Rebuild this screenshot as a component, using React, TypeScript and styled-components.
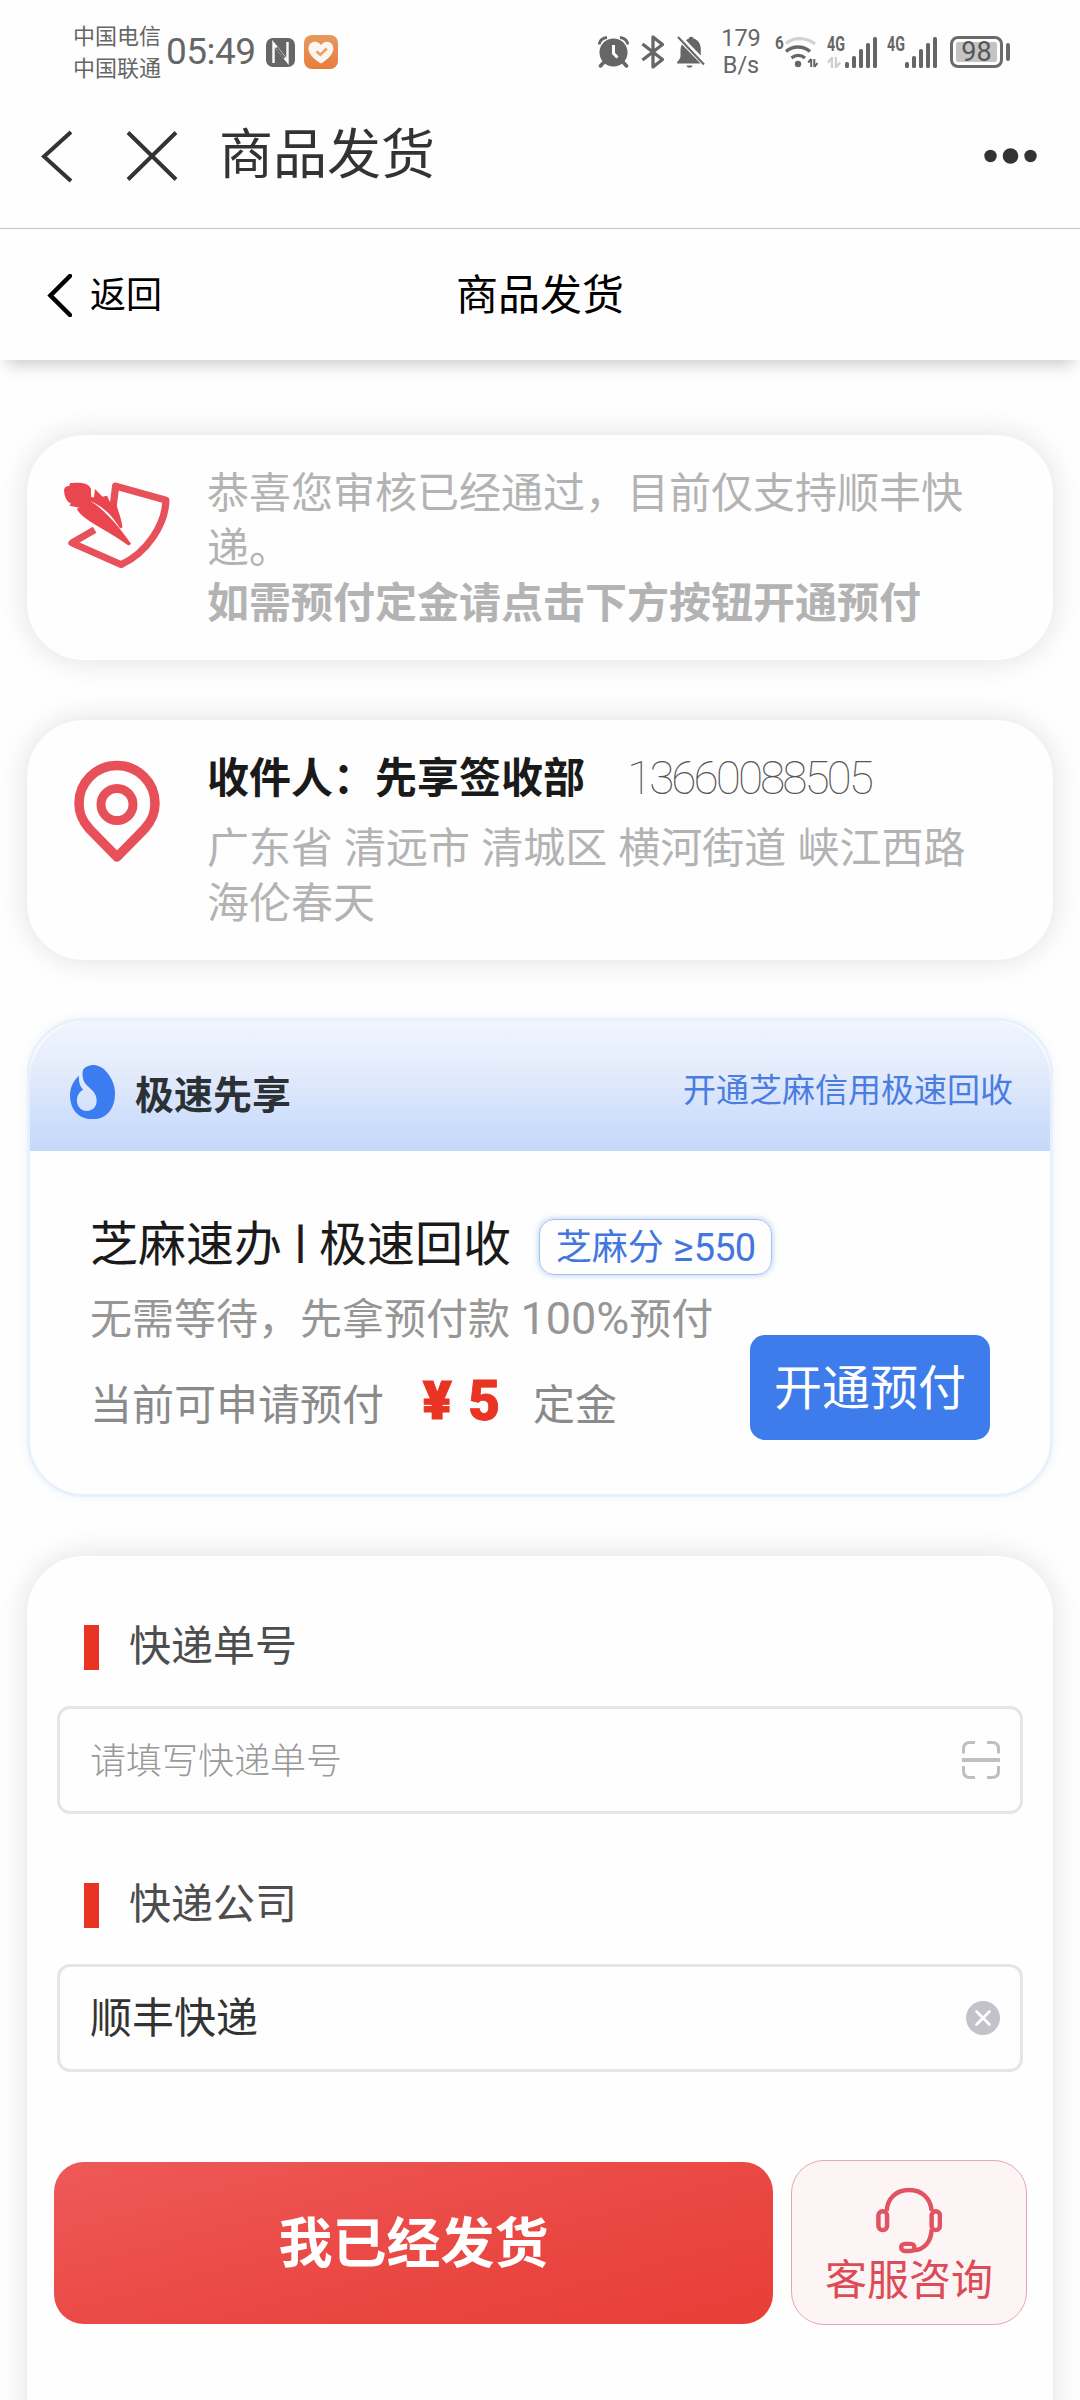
import React from 'react';
import styled, { createGlobalStyle } from 'styled-components';

const GlobalStyle = createGlobalStyle`
  * { box-sizing: border-box; }
  body {
    margin: 0;
    background: #fff;
    font-family: Roboto, "Noto Sans CJK SC", sans-serif;
  }
  svg { display: block; flex: none; }
`;

const Page = styled.div`
  width: 1080px;
  height: 2400px;
  overflow: hidden;
  background: #fefefe;
  display: flex;
  flex-direction: column;
`;

/* ---------- status bar ---------- */

const StatusBar = styled.div`
  height: 104px;
  flex: none;
  padding: 0 70px 0 73px;
  display: flex;
  align-items: center;
  justify-content: space-between;
  color: #666;
`;

const StatusGroup = styled.div`
  display: flex;
  align-items: center;
`;

const Carriers = styled.div`
  font-size: 22px;
  line-height: 32px;
  width: 93px;
  padding-top: 2px;
  white-space: nowrap;
`;

const Clock = styled.div`
  font-size: 37px;
  line-height: 40px;
  width: 100px;
  letter-spacing: -0.5px;
`;

const NfcSlot = styled.div`
  margin-right: 9px;
`;

const NetSpeed = styled.div`
  width: 44px;
  margin: 0 12px 0 13px;
  font-size: 23.5px;
  line-height: 27px;
  text-align: center;
`;

const AlarmSlot = styled.div`
  margin-right: 12px;
`;

const BluetoothSlot = styled.div`
  margin-right: 12px;
`;

const SignalBlock = styled.div`
  width: 50px;
  height: 32px;
  margin-right: 10px;
  display: flex;
  justify-content: space-between;
`;

const NetLabel = styled.div`
  display: flex;
  flex-direction: column;
  justify-content: space-between;
  width: 17px;
  font-size: 21px;
  line-height: 16px;
  font-weight: 700;
  transform: scaleX(0.68);
  transform-origin: left;
`;

const WifiBlock = styled.div`
  display: flex;
  width: 43px;
  margin-right: 9px;
`;

const WifiGeneration = styled.span`
  width: 9px;
  font-size: 18px;
  line-height: 14px;
  font-weight: 700;
  transform: scaleX(0.85);
  transform-origin: left;
`;

const Battery = styled.div`
  width: 53px;
  height: 32px;
  margin-left: 3px;
  border: 3px solid #6b6b6b;
  border-radius: 8px;
  padding: 3px;
`;

const BatteryLevel = styled.div`
  height: 20px;
  border-radius: 2px;
  background: #c4c4c4;
  color: #555;
  font-size: 27px;
  line-height: 21px;
  text-align: center;
`;

const BatteryTip = styled.div`
  width: 4px;
  height: 18px;
  margin-left: 3px;
  border-radius: 2px;
  background: #6b6b6b;
`;

/* ---------- navigation ---------- */

const NavBar = styled.header`
  height: 125px;
  flex: none;
  padding: 0 42px 20px 41px;
  display: flex;
  align-items: center;
  border-bottom: 1px solid #c6c6c6;
`;

const NavTitle = styled.h1`
  flex: 1;
  margin: 0 0 0 41px;
  font-size: 54px;
  line-height: 64px;
  font-weight: 400;
  color: #333;
`;

const CloseSlot = styled.div`
  margin-left: 53px;
`;

const SubHeader = styled.div`
  height: 131px;
  flex: none;
  padding: 1px 47px 0;
  display: grid;
  grid-template-columns: 1fr auto 1fr;
  align-items: center;
  color: #000;
  background: #fefefe;
  box-shadow: 0 12px 15px -7px rgba(0, 0, 0, 0.2);
`;

const BackLink = styled.div`
  display: flex;
  align-items: center;
  gap: 18px;
  font-size: 36px;
  line-height: 44px;
`;

const BackLabel = styled.span`
  padding-top: 2px;
`;

const SubTitle = styled.h2`
  margin: 0;
  padding-top: 2px;
  font-size: 42px;
  line-height: 50px;
  font-weight: 400;
`;

/* ---------- cards ---------- */

const Content = styled.main`
  flex: none;
  padding: 75px 27px 0;
  display: flex;
  flex-direction: column;
`;

const Card = styled.section`
  border-radius: 57px;
  background: #fefefe;
  box-shadow: 0 0 30px rgba(0, 0, 0, 0.12);
`;

const InfoCard = styled(Card)<{ $height: number; $gap: number }>`
  height: ${(p) => p.$height}px;
  margin-bottom: ${(p) => p.$gap}px;
  padding-top: 31px;
  display: flex;
`;

const IconColumn = styled.div<{ $top: number }>`
  width: 180px;
  flex: none;
  padding-top: ${(p) => p.$top}px;
  display: flex;
  justify-content: center;
  align-items: flex-start;
`;

const InfoText = styled.div`
  width: 775px;
  font-size: 42px;
  line-height: 55px;
  color: #b3b3b3;
`;

const Strong = styled.div`
  font-weight: 700;
`;

const Recipient = styled.div`
  display: flex;
  gap: 42px;
  margin-bottom: 15px;
  color: #1a1a1a;
  font-weight: 700;
`;

const Phone = styled.span`
  font-family: Roboto, sans-serif;
  font-weight: 100;
  font-size: 46px;
  line-height: 54px;
  letter-spacing: -3px;
  color: #555;
`;

const Address = styled.div`
  white-space: nowrap;
  word-spacing: 0.7px;
`;

/* ---------- prepay card ---------- */

const PrepayCard = styled.section`
  height: 479px;
  margin: -2px 0 59px;
  border: 3px solid #e8f0fb;
  border-radius: 57px;
  background: #fefefe;
  box-shadow: 0 0 8px rgba(70, 130, 230, 0.1);
`;

const PrepayHeader = styled.div`
  height: 130px;
  padding: 0 37px 0 40px;
  display: flex;
  align-items: center;
  border-radius: 57px 57px 0 0;
  background: linear-gradient(180deg, #f0f5fe 0%, #e2eafb 42%, #cfdffc 75%, #c4d9f8 100%);
`;

const BrandSlot = styled.div`
  margin-top: 12px;
`;

const BrandName = styled.div`
  flex: 1;
  margin: 20px 0 0 20px;
  font-size: 39px;
  line-height: 46px;
  font-weight: 700;
  color: #2c3136;
`;

const PromoLink = styled.div`
  margin-top: 9px;
  font-size: 33px;
  line-height: 40px;
  color: #4a7de2;
`;

const PrepayBody = styled.div`
  padding: 64px 60px 0 60px;
`;

const TitleRow = styled.div`
  height: 60px;
  display: flex;
  align-items: center;
`;

const PlanName = styled.div`
  display: flex;
  align-items: center;
  font-size: 48px;
  line-height: 60px;
  color: #1a1a1a;
  white-space: nowrap;
`;

const Divider = styled.span`
  width: 37px;
  font-size: 45px;
  line-height: 48px;
  text-align: center;
  margin-top: -7px;
  -webkit-text-stroke: 0.8px #1a1a1a;
`;

const ScoreBadge = styled.div`
  width: 233px;
  height: 56px;
  margin: 3px 0 0 28px;
  border: 1.5px solid #a3c1f0;
  border-radius: 15px;
  box-shadow: 0 0 6px rgba(70, 130, 230, 0.45);
  display: flex;
  align-items: center;
  justify-content: center;
  font-size: 36px;
  line-height: 52px;
  padding-top: 3px;
  color: #4377dd;
  white-space: pre;
`;

const Digits = styled.span<{ $size: number; $spacing?: number }>`
  font-size: ${(p) => p.$size}px;
  letter-spacing: ${(p) => p.$spacing ?? 0}px;
`;

const PlanDetails = styled.div`
  margin-top: 17px;
  display: flex;
  justify-content: space-between;
  align-items: flex-start;
`;

const PlanCopy = styled.div`
  font-size: 42px;
  color: #969696;
  white-space: nowrap;
`;

const Benefit = styled.div`
  line-height: 54px;
`;

const Quota = styled.div`
  height: 60px;
  margin-top: 29px;
  display: flex;
  align-items: center;
  line-height: 60px;
  color: #8a8a8a;
`;

const Amount = styled.span`
  width: 78px;
  margin: -11px 33px 0 38px;
  display: flex;
  justify-content: space-between;
  font-size: 55px;
  font-weight: 900;
  color: #e93323;
  -webkit-text-stroke: 0.8px #e93323;
`;

const YuanSign = styled.span`
  font-family: Inter, Roboto, sans-serif;
  font-size: 52px;
`;

const OpenButton = styled.button`
  width: 240px;
  height: 105px;
  margin-top: 43px;
  padding: 3px 0 0;
  border: 0;
  border-radius: 15px;
  background: #3d7cea;
  color: #fff;
  font-family: inherit;
  font-size: 48px;
  line-height: 102px;
`;

/* ---------- shipping form ---------- */

const FormCard = styled(Card)`
  height: 1000px;
  padding-top: 61px;
`;

const Field = styled.div`
  padding: 0 30px;
  margin-bottom: 61px;
`;

const FieldLabel = styled.div`
  height: 60px;
  margin: 0 0 29px 27px;
  display: flex;
  align-items: center;
  gap: 30px;
  font-size: 42px;
  line-height: 60px;
  color: #4d4d4d;

  &::before {
    content: "";
    width: 15px;
    height: 45px;
    margin-top: 1px;
    background: #e93323;
  }
`;

const InputBox = styled.div`
  height: 108px;
  padding: 0 20px 0 30px;
  border: 3px solid #e5e5e5;
  border-radius: 13px;
  display: flex;
  align-items: center;
  justify-content: space-between;
`;

const Placeholder = styled.span`
  padding-top: 4px;
  font-size: 36px;
  line-height: 50px;
  font-weight: 200;
  color: #999;
`;

const Value = styled.span`
  padding-top: 2px;
  font-size: 42px;
  line-height: 54px;
  color: #333;
`;

const Actions = styled.div`
  padding: 0 26px 0 27px;
  margin-top: 88px;
  display: flex;
  align-items: center;
  justify-content: space-between;
`;

const ShipButton = styled.button`
  width: 719px;
  height: 162px;
  padding: 4px 0 0;
  border: 0;
  border-radius: 30px;
  background: linear-gradient(165deg, #ee5959 0%, #ea4843 55%, #e83e37 100%);
  color: #fff;
  font-family: inherit;
  font-size: 54px;
  line-height: 158px;
  font-weight: 700;
`;

const ServiceButton = styled.div`
  width: 236px;
  height: 165px;
  border: 1.5px solid #e3a9ae;
  border-radius: 33px;
  background: #fdf4f5;
  padding-top: 26px;
  display: flex;
  flex-direction: column;
  align-items: center;
  font-size: 42px;
  line-height: 54px;
  color: #dc4b56;
`;

/* ---------- icons ---------- */

const NfcIcon = () => (
  <svg width="29" height="29" viewBox="0 0 29 29">
    <rect width="29" height="29" rx="7" fill="#666" />
    <path d="M7.500 25V5.500L19 20" fill="none" stroke="#fefefe" strokeWidth="2.400" />
    <path d="M21.500 4V23.500L10 9" fill="none" stroke="#fefefe" strokeWidth="2.400" />
    <path d="M10.500 9.500l8 10.500" stroke="#666" strokeWidth="2.200" />
  </svg>
);

const HealthIcon = () => (
  <svg width="34" height="34" viewBox="0 0 34 34">
    <defs>
      <linearGradient id="health" x1="0" y1="0" x2="0" y2="1">
        <stop offset="0" stopColor="#e59a5c" />
        <stop offset="1" stopColor="#e97c40" />
      </linearGradient>
    </defs>
    <rect width="34" height="34" rx="8" fill="url(#health)" />
    <path d="M17 28.500C9 23.500 4.500 18.500 4.500 13.500 4.500 9.500 7.500 6.800 11 6.800c2.600 0 4.800 1.300 6 3.400 1.200-2.100 3.400-3.400 6-3.400 3.500 0 6.300 2.700 6.300 6.700C29.300 18.500 25 23.500 17 28.500z" fill="#fdf6f0" />
    <path d="M12.500 16.500l3.800 3.300 6.500-6.300" fill="none" stroke="#eaa06a" strokeWidth="2.600" />
  </svg>
);

const AlarmIcon = () => (
  <svg width="31" height="32" viewBox="0 0 31 32">
    <circle cx="15.500" cy="16.500" r="14" fill="#666" />
    <path d="M1 8.500A9 9 0 0 1 9 1.500M30 8.500A9 9 0 0 0 22 1.500" fill="none" stroke="#666" strokeWidth="2.800" />
    <path d="M6 26l-3.500 4M25 26l3.500 4" stroke="#666" strokeWidth="3.500" strokeLinecap="round" />
    <path d="M15.500 9v8.500l4 4" fill="none" stroke="#fefefe" strokeWidth="3" />
  </svg>
);

const BluetoothIcon = () => (
  <svg width="23" height="34" viewBox="0 0 23 34">
    <path d="M1.500 9l20 15.500-9.500 7.500V2l9.500 7.500-20 15.500" fill="none" stroke="#666" strokeWidth="3.300" strokeLinejoin="round" />
  </svg>
);

const MutedBellIcon = () => (
  <svg width="30" height="34" viewBox="0 0 30 34">
    <path d="M1 28.500c0-2.500 3.500-4 3.500-7.500v-6c0-2 .5-4 1.500-5.500l18.500 19zM10 5.200c.8-.7 1.700-1.200 2.700-1.500C12.800 1.500 17 1 17.500 3.500c4.500 1.200 7.300 5.500 7.300 10.500v6.500z" fill="#666" />
    <path d="M10.500 30.500h6c-.6 3-5.400 3-6 0z" fill="#666" />
    <path d="M2 2l26 27.500" stroke="#666" strokeWidth="2" />
  </svg>
);

const WifiIcon = () => (
  <svg width="34" height="32" viewBox="0 0 34 32">
    <g fill="none" strokeWidth="3.300">
      <path d="M2 7.500C10 1 22 1 31 8" stroke="#d2d2d2" />
      <path d="M2 15.500c7-6 17-6 24 0" stroke="#666" />
      <path d="M7.500 22c4-3.500 9.500-3.500 13.500 0" stroke="#666" />
    </g>
    <circle cx="14" cy="28" r="3.200" fill="#666" />
    <path d="M27.200 31v-8M27.200 23l-3 3.500M30.300 23v8M30.300 31l3.200-4" stroke="#666" strokeWidth="2" fill="none" />
  </svg>
);

const DataArrows = () => (
  <svg width="21" height="11" viewBox="0 0 16 11" preserveAspectRatio="none">
    <path d="M5.500 11V1L1 5.500M10 0v10l5-4.500" fill="none" stroke="#d0d0d0" strokeWidth="2.600" />
  </svg>
);

const SignalBars = () => (
  <svg width="32" height="32" viewBox="0 0 32 32">
    {[6, 12, 19, 25, 31].map((h, i) => (
      <rect key={h} x={i * 7} y={32 - h} width="4" height={h} rx="1.600" fill="#666" />
    ))}
  </svg>
);

const Chevron = ({ w, h, stroke, color, cap }: { w: number; h: number; stroke: number; color: string; cap: 'round' | 'butt' }) => (
  <svg width={w} height={h} viewBox={`0 0 ${w} ${h}`}>
    <path d={`M${w - 2} 2L${stroke - 1} ${h / 2}L${w - 2} ${h - 2}`} fill="none" stroke={color} strokeWidth={stroke} strokeLinecap={cap} />
  </svg>
);

const CloseIcon = () => (
  <svg width="52" height="50" viewBox="0 0 52 50">
    <path d="M2 1.500l48 47M50 1.500l-48 47" stroke="#333" strokeWidth="4" />
  </svg>
);

const MoreIcon = () => (
  <svg width="54" height="18" viewBox="0 0 54 18">
    <g fill="#333">
      <circle cx="6.500" cy="9" r="6.200" />
      <circle cx="26.500" cy="9" r="7.800" />
      <circle cx="46.500" cy="9" r="6.200" />
    </g>
  </svg>
);

const QuillIcon = () => (
  <svg width="106" height="87" viewBox="187 245 308 260" preserveAspectRatio="none">
    <path d="M330 316L337 257L483 299C482 370 430 455 353 492L210 427L276 388" fill="none" stroke="#e8505a" strokeWidth="21" strokeLinejoin="round" />
    <path d="M187 268C190 258 198 256 204 258C200 251 204 247 211 248C235 245 258 248 265 264L266 290L274 291L277 266L299 289L312 286L322 308L336 296C342 330 352 345 357 380L350 384C325 342 300 318 262 302C298 322 340 368 382 430L374 435C310 385 240 360 224 325L232 322L203 316L207 309C192 302 188 285 187 268z" fill="#ea4650" />
    <path d="M284 308L322 308L345 368C326 340 305 322 284 308z" fill="#ea4650" />
  </svg>
);

const PinIcon = () => (
  <svg width="86" height="104" viewBox="0 0 86 104">
    <g fill="none" stroke="#e85059" strokeLinejoin="round">
      <path d="M43 97L15.500 69C7.500 60 5 53 5 43.500a38 38 0 0 1 76 0C81 53 78.500 60 70.500 69z" strokeWidth="9.500" />
      <circle cx="43" cy="44.500" r="16" strokeWidth="9" />
    </g>
  </svg>
);

const DropIcon = () => (
  <svg width="45" height="54" viewBox="205 195 130 160" preserveAspectRatio="none">
    <path d="M243 208C265 185 295 195 312 217C328 238 335 255 335 280C335 325 310 356 270 356C232 356 205 328 205 285C205 262 214 243 231 226C229 245 234 258 243 268C233 273 225 285 225 300C225 318 237 331 254 331C271 331 282 318 282 301C282 273 260 265 249 250C241 238 239 222 243 208z" fill="#3b7df0" />
  </svg>
);

const ScanIcon = () => (
  <svg width="38" height="38" viewBox="0 0 38 38">
    <path d="M1.500 12.500V8q0-6.500 6.500-6.500h5M25 1.500h5q6.500 0 6.500 6.500v4.500M36.500 25v5q0 6.500-6.500 6.500h-5M13 36.500H8q-6.500 0-6.500-6.500v-5" fill="none" stroke="#bfbfc1" strokeWidth="3" />
    <path d="M0 19h38" stroke="#c0c0c2" strokeWidth="4" />
  </svg>
);

const ClearIcon = () => (
  <svg width="34" height="34" viewBox="0 0 34 34">
    <circle cx="17" cy="17" r="17" fill="#c1c2ca" />
    <path d="M10.500 10.500l13 13M23.500 10.500l-13 13" stroke="#fff" strokeWidth="2.700" strokeLinecap="round" />
  </svg>
);

const HeadsetIcon = () => (
  <svg width="66" height="67" viewBox="977 204 191 199" preserveAspectRatio="none">
    <g fill="none" stroke="#e05360" strokeWidth="13">
      <path d="M1008 275C1010 238 1035 213 1073 213C1110 213 1135 238 1138 275" />
      <rect x="984" y="276" width="25" height="56" rx="12" />
      <rect x="1138" y="276" width="24" height="56" rx="12" />
      <path d="M1138 330C1137 365 1118 391 1085 392" />
      <rect x="1050" y="373" width="38" height="21" rx="10" strokeWidth="13" />
    </g>
  </svg>
);

export default function App() {
  return (
    <>
      <GlobalStyle />
      <Page>
        <StatusBar>
          <StatusGroup>
            <Carriers>
              中国电信
              <br />
              中国联通
            </Carriers>
            <Clock>05:49</Clock>
            <NfcSlot>
              <NfcIcon />
            </NfcSlot>
            <HealthIcon />
          </StatusGroup>
          <StatusGroup>
            <AlarmSlot>
              <AlarmIcon />
            </AlarmSlot>
            <BluetoothSlot>
              <BluetoothIcon />
            </BluetoothSlot>
            <MutedBellIcon />
            <NetSpeed>
              179
              <br />
              B/s
            </NetSpeed>
            <WifiBlock>
              <WifiGeneration>6</WifiGeneration>
              <WifiIcon />
            </WifiBlock>
            <SignalBlock>
              <NetLabel>
                <span>4G</span>
                <DataArrows />
              </NetLabel>
              <SignalBars />
            </SignalBlock>
            <SignalBlock>
              <NetLabel>
                <span>4G</span>
              </NetLabel>
              <SignalBars />
            </SignalBlock>
            <Battery>
              <BatteryLevel>98</BatteryLevel>
            </Battery>
            <BatteryTip />
          </StatusGroup>
        </StatusBar>

        <NavBar>
          <Chevron w={32} h={53} stroke={4} color="#333" cap="butt" />
          <CloseSlot>
            <CloseIcon />
          </CloseSlot>
          <NavTitle>商品发货</NavTitle>
          <MoreIcon />
        </NavBar>

        <SubHeader>
          <BackLink>
            <Chevron w={25} h={43} stroke={4.5} color="#000" cap="round" />
            <BackLabel>返回</BackLabel>
          </BackLink>
          <SubTitle>商品发货</SubTitle>
        </SubHeader>

        <Content>
          <InfoCard $height={225} $gap={60}>
            <IconColumn $top={16}>
              <QuillIcon />
            </IconColumn>
            <InfoText>
              恭喜您审核已经通过，目前仅支持顺丰快递。
              <Strong>如需预付定金请点击下方按钮开通预付</Strong>
            </InfoText>
          </InfoCard>

          <InfoCard $height={240} $gap={60}>
            <IconColumn $top={9}>
              <PinIcon />
            </IconColumn>
            <InfoText>
              <Recipient>
                收件人：先享签收部
                <Phone>13660088505</Phone>
              </Recipient>
              <Address>
                广东省 清远市 清城区 横河街道 峡江西路
                <br />
                海伦春天
              </Address>
            </InfoText>
          </InfoCard>

          <PrepayCard>
            <PrepayHeader>
              <BrandSlot>
                <DropIcon />
              </BrandSlot>
              <BrandName>极速先享</BrandName>
              <PromoLink>开通芝麻信用极速回收</PromoLink>
            </PrepayHeader>
            <PrepayBody>
              <TitleRow>
                <PlanName>
                  芝麻速办<Divider>|</Divider>极速回收
                </PlanName>
                <ScoreBadge>
                  芝麻分 <Digits $size={40}>≥</Digits> <Digits $size={38} $spacing={-0.8}>550</Digits>
                </ScoreBadge>
              </TitleRow>
              <PlanDetails>
                <PlanCopy>
                  <Benefit>
                    无需等待，先拿预付款 <Digits $size={45}>100%</Digits>预付
                  </Benefit>
                  <Quota>
                    当前可申请预付
                    <Amount>
                      <YuanSign>¥</YuanSign>
                      <span>5</span>
                    </Amount>
                    定金
                  </Quota>
                </PlanCopy>
                <OpenButton>开通预付</OpenButton>
              </PlanDetails>
            </PrepayBody>
          </PrepayCard>

          <FormCard>
            <Field>
              <FieldLabel>快递单号</FieldLabel>
              <InputBox>
                <Placeholder>请填写快递单号</Placeholder>
                <ScanIcon />
              </InputBox>
            </Field>
            <Field>
              <FieldLabel>快递公司</FieldLabel>
              <InputBox>
                <Value>顺丰快递</Value>
                <ClearIcon />
              </InputBox>
            </Field>
            <Actions>
              <ShipButton>我已经发货</ShipButton>
              <ServiceButton>
                <HeadsetIcon />
                客服咨询
              </ServiceButton>
            </Actions>
          </FormCard>
        </Content>
      </Page>
    </>
  );
}
